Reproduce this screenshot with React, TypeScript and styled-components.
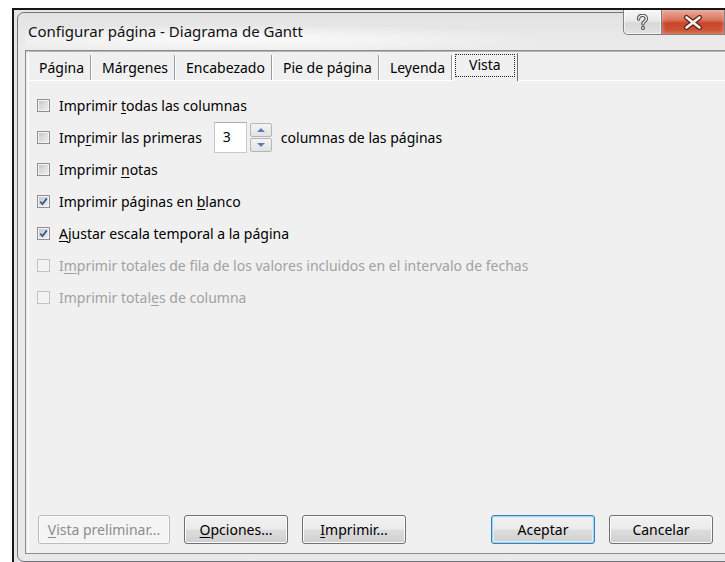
import React from "react";
import styled, { createGlobalStyle, css } from "styled-components";

const GlobalStyle = createGlobalStyle`
  html, body {
    margin: 0;
    padding: 0;
    background: #fff;
  }
  body {
    font-family: "Noto Sans", "Open Sans", sans-serif;
  }
  * {
    box-sizing: border-box;
  }
`;

const Screen = styled.div`
  width: 725px;
  height: 562px;
  overflow: hidden;
  background: #fff;
  padding: 8px 0 0 12px;
`;

const Desktop = styled.div`
  height: 100%;
  border-top: 2px solid #161616;
  border-left: 2px solid #161616;
  padding: 2px 0 0 3px;
  background: #e4e4e4;
`;

const Window = styled.div`
  width: 716px;
  height: 550px;
  border: 1px solid #70757a;
  border-radius: 7px;
  background: linear-gradient(180deg, #e2e2e2 0%, #ebebeb 6%, #e9e9e9 100%);
  padding: 0 7px 7px 7px;
  display: flex;
  flex-direction: column;
`;

const TitleBar = styled.div`
  height: 37px;
  flex: none;
  display: flex;
  justify-content: space-between;
  align-items: flex-start;
  background: radial-gradient(
    ellipse 45% 40% at 30% 70%,
    rgba(255, 255, 255, 0.85),
    rgba(255, 255, 255, 0)
  );
`;

const Title = styled.div`
  padding-left: 3px;
  line-height: 37px;
  font-size: 15px;
  color: #111;
  white-space: nowrap;
`;

const Captions = styled.div`
  display: flex;
  margin-top: -3px;
`;

const CaptionButton = styled.div<{ $close?: boolean }>`
  height: 25px;
  display: flex;
  align-items: center;
  justify-content: center;
  border: 1px solid #7d8288;
  border-top: none;
  ${(p) =>
    p.$close
      ? css`
          width: 63px;
          border-left: none;
          background: linear-gradient(
            180deg,
            #e9a99a 0%,
            #d9785f 40%,
            #c8452a 55%,
            #cf5a3d 100%
          );
          box-shadow: inset 0 0 4px rgba(255, 190, 170, 0.7);
        `
      : css`
          width: 39px;
          border-radius: 0 0 0 5px;
          background: linear-gradient(180deg, #f7f7f7 0%, #e9e9e9 45%, #d8d8d8 55%, #e2e2e2 100%);
          box-shadow: inset 0 0 0 1px rgba(255, 255, 255, 0.6);
        `}
`;

const Client = styled.div`
  flex: 1;
  display: flex;
  flex-direction: column;
  border: 1px solid #8c8c8c;
  border-right: none;
  box-shadow: inset 0 1px 0 #b4b4b4;
  background: #f0f0f0;
  padding-left: 2px;
`;

const TabStrip = styled.div`
  height: 29px;
  flex: none;
  display: flex;
  align-items: flex-end;
  border-left: 1px solid #fff;
`;

const Tab = styled.div`
  height: 25px;
  display: flex;
  align-items: center;
  padding: 0 6px 1px 10px;
  font-size: 14px;
  color: #000;
  border-right: 1px solid #9a9a9a;
  box-shadow: 1px 0 0 #fff;
  margin-right: 1px;
  white-space: nowrap;
`;

const ActiveTab = styled.div`
  align-self: stretch;
  margin-top: 2px;
  margin-bottom: -1px;
  padding: 1px 2px 2px 1px;
  border-left: 1px solid #fff;
  border-right: 1px solid #6f6f6f;
  background: #f0f0f0;
  position: relative;
  z-index: 1;
  display: flex;
`;

const FocusRect = styled.div`
  border: 1px dotted #222;
  padding: 0 13px 2px;
  height: 23px;
  display: flex;
  align-items: center;
  font-size: 14px;
  color: #000;
`;

const Panel = styled.div`
  flex: 1;
  display: flex;
  flex-direction: column;
  border-top: 1px solid #fff;
  border-left: 1px solid #fff;
`;

const Options = styled.div`
  display: flex;
  flex-direction: column;
  padding: 8px 0 0 8px;
`;

const Row = styled.div`
  height: 32px;
  display: flex;
  align-items: center;
`;

const Box = styled.span<{ $disabled?: boolean }>`
  width: 13px;
  height: 13px;
  flex: none;
  display: flex;
  align-items: center;
  justify-content: center;
  border: 1px solid ${(p) => (p.$disabled ? "#c2c2c2" : "#8e8f8f")};
  box-shadow: inset 0 0 0 1px #f4f4f4;
  background: ${(p) =>
    p.$disabled
      ? "#f2f2f2"
      : "linear-gradient(135deg, #bfc2c7 0%, #dcdde0 50%, #f3f3f3 100%)"};
  margin-right: 9px;
`;

const Label = styled.span<{ $disabled?: boolean }>`
  font-size: 14px;
  color: ${(p) => (p.$disabled ? "#a2a2a2" : "#000")};
  white-space: nowrap;
`;

const U = styled.span`
  text-decoration: underline;
  text-underline-offset: 2px;
`;

const Field = styled.div`
  width: 33px;
  height: 31px;
  margin-left: 12px;
  border: 1px solid #c5c8ce;
  border-top-color: #abadb3;
  background: #fff;
  font-size: 14px;
  padding: 4px 0 0 8px;
  color: #000;
`;

const Spin = styled.div`
  width: 22px;
  height: 29px;
  margin-left: 3px;
  margin-right: 9px;
  display: flex;
  flex-direction: column;
  gap: 1px;
`;

const SpinButton = styled.div`
  flex: 1;
  display: flex;
  align-items: center;
  justify-content: center;
  border: 1px solid #b5b5b5;
  border-radius: 2px;
  background: linear-gradient(180deg, #f4f4f4, #e2e2e2);
`;

const Arrow = styled.span<{ $down?: boolean }>`
  width: 0;
  height: 0;
  border-left: 4px solid transparent;
  border-right: 4px solid transparent;
  ${(p) =>
    p.$down
      ? css`
          border-top: 4px solid #5a7db4;
        `
      : css`
          border-bottom: 4px solid #5a7db4;
        `}
`;

const Spacer = styled.div`
  flex: 1;
`;

const ButtonBar = styled.div`
  display: flex;
  justify-content: space-between;
  padding: 0 12px 9px 9px;
`;

const ButtonGroup = styled.div`
  display: flex;
  gap: 14px;
`;

const Button = styled.div<{ $wide?: boolean; $primary?: boolean; $disabled?: boolean }>`
  width: ${(p) => (p.$wide ? 132 : 104)}px;
  height: 29px;
  display: flex;
  align-items: center;
  justify-content: center;
  padding-bottom: 1px;
  font-size: 14px;
  color: #000;
  border: 1px solid #707070;
  border-radius: 3px;
  background: linear-gradient(180deg, #f2f2f2 0%, #ebebeb 48%, #dddddd 52%, #cfcfcf 100%);
  box-shadow: inset 0 0 0 1px #fbfbfb;
  ${(p) =>
    p.$primary &&
    css`
      border-color: #3c7fb1;
      box-shadow: inset 0 0 0 1px #9fd6f3, inset 0 0 0 2px #d8effa;
    `}
  ${(p) =>
    p.$disabled &&
    css`
      color: #8d8d8d;
      border-color: #b9bcbf;
      background: #f4f4f4;
      box-shadow: inset 0 0 0 1px #fbfbfb;
    `}
`;

const Check = () => (
  <svg width="9" height="9" viewBox="0 0 9 9">
    <path d="M1.2 4.6 L3.5 7 L7.8 1.4" fill="none" stroke="#3d5a94" strokeWidth="1.8" />
  </svg>
);

const HelpGlyph = () => (
  <svg width="13" height="17" viewBox="0 0 13 17">
    <path
      d="M2.6 5 C2.6 2.3 4.3 1.4 6.5 1.4 C8.9 1.4 10.4 2.7 10.4 4.7 C10.4 7.1 7 7.3 7 10"
      fill="none"
      stroke="#4a4f55"
      strokeWidth="3.4"
      strokeLinecap="round"
    />
    <circle cx="7" cy="14" r="2" fill="#4a4f55" />
    <path
      d="M2.6 5 C2.6 2.3 4.3 1.4 6.5 1.4 C8.9 1.4 10.4 2.7 10.4 4.7 C10.4 7.1 7 7.3 7 10"
      fill="none"
      stroke="#f4f4f4"
      strokeWidth="1.4"
      strokeLinecap="round"
    />
    <circle cx="7" cy="14" r="0.9" fill="#f4f4f4" />
  </svg>
);

const CloseGlyph = () => (
  <svg width="20" height="15" viewBox="0 0 20 15">
    <path d="M3.5 2.5 L16.5 12.5 M16.5 2.5 L3.5 12.5" stroke="#5b2418" strokeWidth="5" strokeLinecap="round" />
    <path d="M3.5 2.5 L16.5 12.5 M16.5 2.5 L3.5 12.5" stroke="#f8f1ef" strokeWidth="2.6" strokeLinecap="round" />
  </svg>
);

type Option = {
  checked?: boolean;
  disabled?: boolean;
  label: React.ReactNode;
};

const options: Option[] = [
  { label: <>Imprimir <U>t</U>odas las columnas</> },
  { label: null },
  { label: <>Imprimir <U>n</U>otas</> },
  { checked: true, label: <>Imprimir páginas en <U>b</U>lanco</> },
  { checked: true, label: <><U>A</U>justar escala temporal a la página</> },
  {
    disabled: true,
    label: <>I<U>m</U>primir totales de fila de los valores incluidos en el intervalo de fechas</>,
  },
  { disabled: true, label: <>Imprimir total<U>e</U>s de columna</> },
];

const tabs = ["Página", "Márgenes", "Encabezado", "Pie de página", "Leyenda"];

export default function App() {
  return (
    <>
      <GlobalStyle />
      <Screen>
        <Desktop>
          <Window>
            <TitleBar>
              <Title>Configurar página - Diagrama de Gantt</Title>
              <Captions>
                <CaptionButton>
                  <HelpGlyph />
                </CaptionButton>
                <CaptionButton $close>
                  <CloseGlyph />
                </CaptionButton>
              </Captions>
            </TitleBar>
            <Client>
              <TabStrip>
                {tabs.map((t) => (
                  <Tab key={t}>{t}</Tab>
                ))}
                <ActiveTab>
                  <FocusRect>Vista</FocusRect>
                </ActiveTab>
              </TabStrip>
              <Panel>
                <Options>
                  {options.map((o, i) =>
                    i === 1 ? (
                      <Row key={i}>
                        <Box />
                        <Label>
                          Imp<U>r</U>imir las primeras
                        </Label>
                        <Field>3</Field>
                        <Spin>
                          <SpinButton>
                            <Arrow />
                          </SpinButton>
                          <SpinButton>
                            <Arrow $down />
                          </SpinButton>
                        </Spin>
                        <Label>columnas de las páginas</Label>
                      </Row>
                    ) : (
                      <Row key={i}>
                        <Box $disabled={o.disabled}>{o.checked && <Check />}</Box>
                        <Label $disabled={o.disabled}>{o.label}</Label>
                      </Row>
                    )
                  )}
                </Options>
                <Spacer />
                <ButtonBar>
                  <ButtonGroup>
                    <Button $wide $disabled>
                      <span>
                        <U>V</U>ista preliminar...
                      </span>
                    </Button>
                    <Button>
                      <span>
                        <U>O</U>pciones...
                      </span>
                    </Button>
                    <Button>
                      <span>
                        <U>I</U>mprimir...
                      </span>
                    </Button>
                  </ButtonGroup>
                  <ButtonGroup>
                    <Button $primary>Aceptar</Button>
                    <Button>Cancelar</Button>
                  </ButtonGroup>
                </ButtonBar>
              </Panel>
            </Client>
          </Window>
        </Desktop>
      </Screen>
    </>
  );
}
